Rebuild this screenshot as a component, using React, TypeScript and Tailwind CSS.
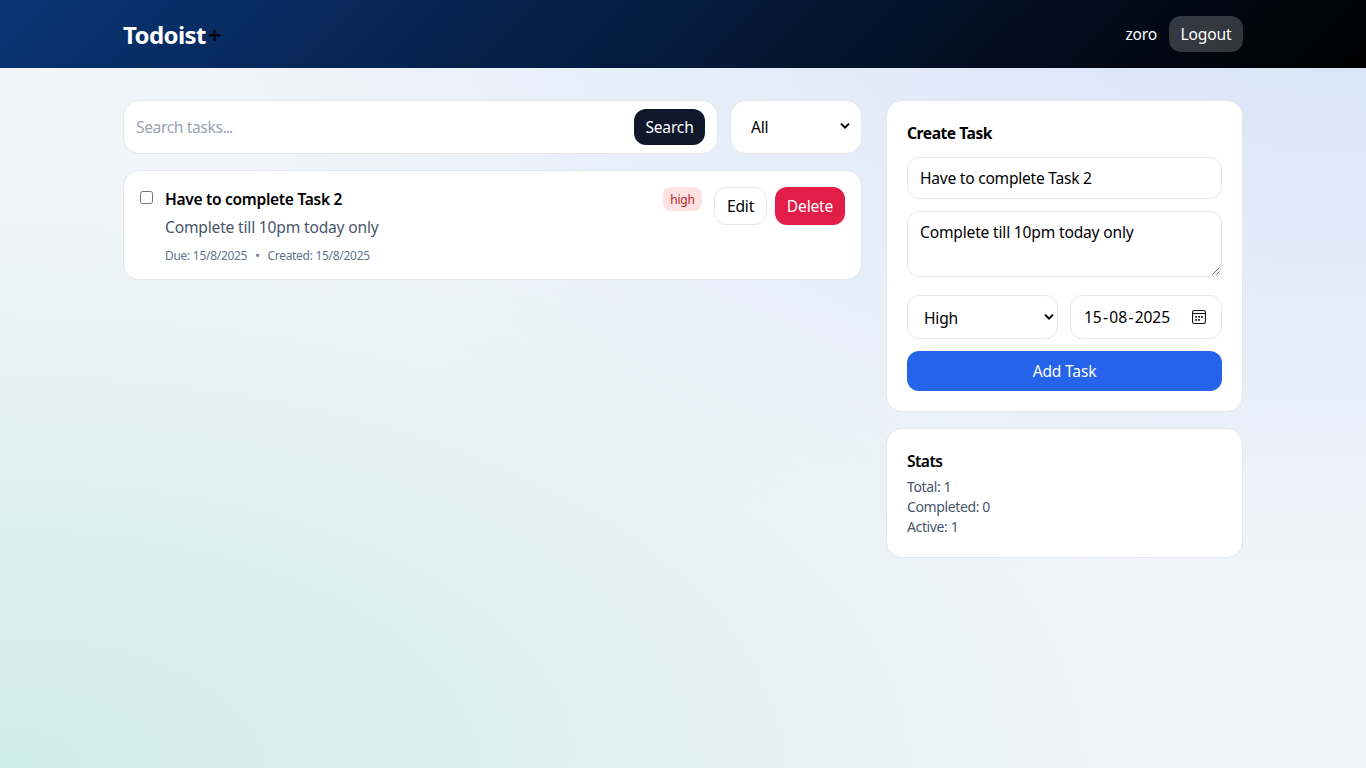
import React from "react";

const field = "rounded-xl border border-[#e5e7eb] bg-white";
const card = "rounded-2xl border border-[#e5e7eb] bg-white";

function Chevron() {
  return (
    <svg width="10" height="8" viewBox="0 0 10 8" fill="none" stroke="#000" strokeWidth="2">
      <path d="M1 1.6 L5 5.6 L9 1.6" />
    </svg>
  );
}

function Calendar() {
  return (
    <svg width="14" height="14" viewBox="0 0 14 14" fill="none" stroke="#111" strokeWidth="1.1">
      <rect x="0.55" y="0.55" width="12.9" height="12.9" rx="1.8" />
      <path d="M0.6 3.5 H13.4" />
      <g fill="#222" stroke="none">
        <rect x="3.2" y="6" width="1.8" height="1.8" />
        <rect x="6.1" y="6" width="1.8" height="1.8" />
        <rect x="9" y="6" width="1.8" height="1.8" />
        <rect x="3.2" y="9" width="1.8" height="1.8" />
        <rect x="6.1" y="9" width="1.8" height="1.8" />
      </g>
    </svg>
  );
}

function Grip() {
  return (
    <svg width="8" height="8" viewBox="0 0 8 8" fill="none" stroke="#555" strokeWidth="0.9">
      <path d="M0.5 7.5 L7.5 0.5 M4.5 7.5 L7.5 4.5" />
    </svg>
  );
}

export default function App() {
  return (
    <div className="min-h-screen bg-[#f1f5f9] bg-[radial-gradient(1200px_600px_at_100%_0%,rgba(59,130,246,0.15),transparent_100%),radial-gradient(1200px_600px_at_0%_100%,rgba(16,185,129,0.15),transparent_100%)] font-['Noto_Sans','Open_Sans',sans-serif] text-[15.6px] leading-6 tracking-[-0.19px] text-black">
      <header className="h-[68px] bg-[linear-gradient(135deg,#0a3576,#000)]">
        <div className="mx-auto flex h-full w-[1120px] items-center justify-between text-white">
          <h1 className="pt-0.5 text-2xl font-bold tracking-[-0.6px]"><span>Todoist</span><span className="ml-0.5 text-[#020617]">+</span></h1>
          <div className="flex items-center gap-3">
            <span>zoro</span>
            <button className="h-9 w-[74px] rounded-xl bg-white/20">Logout</button>
          </div>
        </div>
      </header>
      <main className="mx-auto grid w-[1120px] grid-cols-[739px_357px] items-start gap-6 pt-8">
        <section className="flex flex-col gap-4">
          <div className="flex gap-3">
            <div className={`flex h-[54px] w-[595px] items-center justify-between px-3 ${card}`}>
              <span className="tracking-[-0.38px] text-[#9ca3af]">Search tasks<span className="tracking-[-0.9px]">...</span></span>
              <button className="h-9 w-[71px] rounded-xl bg-[#0f172a] text-white">Search</button>
            </div>
            <div className={`flex h-[54px] flex-1 items-center justify-between pr-[11px] pl-5 ${card}`}>
              <span>All</span><span className="-mt-0.5 flex"><Chevron /></span>
            </div>
          </div>
          <article className={`flex h-[110px] items-start p-4 ${card}`}>
            <span className="mt-1 mr-3 size-[13px] rounded-[2.5px] border border-[#767676]" />
            <div className="flex flex-1 flex-col">
              <h3 className="font-semibold tracking-[-0.32px]">Have to complete Task 2</h3>
              <p className="mt-1 text-[#475569]">Complete till 10pm today only</p>
              <p className="mt-[9px] flex gap-2 text-xs leading-4 tracking-[-0.29px] text-[#64748b]"><span>Due: 15/8/2025</span><span>•</span><span>Created: 15/8/2025</span></p>
            </div>
            <span className="mr-3 flex h-6 w-[39px] items-center justify-center rounded-lg bg-[#fee2e2] pt-px text-xs text-[#b91c1c]">high</span>
            <button className={`mr-2 h-[38px] w-[53px] ${field}`}>Edit</button>
            <button className="h-[38px] w-[70px] rounded-xl bg-[#e11d48] text-white">Delete</button>
          </article>
        </section>
        <aside className="flex flex-col gap-4">
          <section className={`flex h-[312px] flex-col p-5 ${card}`}>
            <h2 className="mb-3 font-bold tracking-[-0.45px]">Create Task</h2>
            <div className={`mb-3 flex h-[42px] items-center px-3 tracking-[-0.25px] ${field}`}>Have to complete Task 2</div>
            <div className={`relative mb-[18px] h-[66px] px-3 pt-2 ${field}`}>
              Complete till 10pm today only
              <span className="absolute right-px bottom-px"><Grip /></span>
            </div>
            <div className="mb-3 flex gap-3">
              <div className={`flex h-11 w-[151px] items-center justify-between pr-[3px] pl-4 ${field}`}>
                <span className="pt-0.5">High</span><Chevron />
              </div>
              <div className={`flex h-11 w-[152px] items-center justify-between pr-[15px] pl-[13px] ${field}`}>
                <span className="tracking-[-0.1px]">15<span className="mx-[1.4px]">-</span>08<span className="mx-[1.4px]">-</span>2025</span><Calendar />
              </div>
            </div>
            <button className="h-10 rounded-xl bg-[#2563eb] text-white">Add Task</button>
          </section>
          <section className={`h-[130px] p-5 ${card}`}>
            <h2 className="mb-1 font-semibold tracking-[-0.55px]">Stats</h2>
            <div className="text-sm leading-5 tracking-[-0.38px] text-[#475569]">
              <p>Total: 1</p>
              <p>Completed: 0</p>
              <p>Active: 1</p>
            </div>
          </section>
        </aside>
      </main>
    </div>
  );
}
